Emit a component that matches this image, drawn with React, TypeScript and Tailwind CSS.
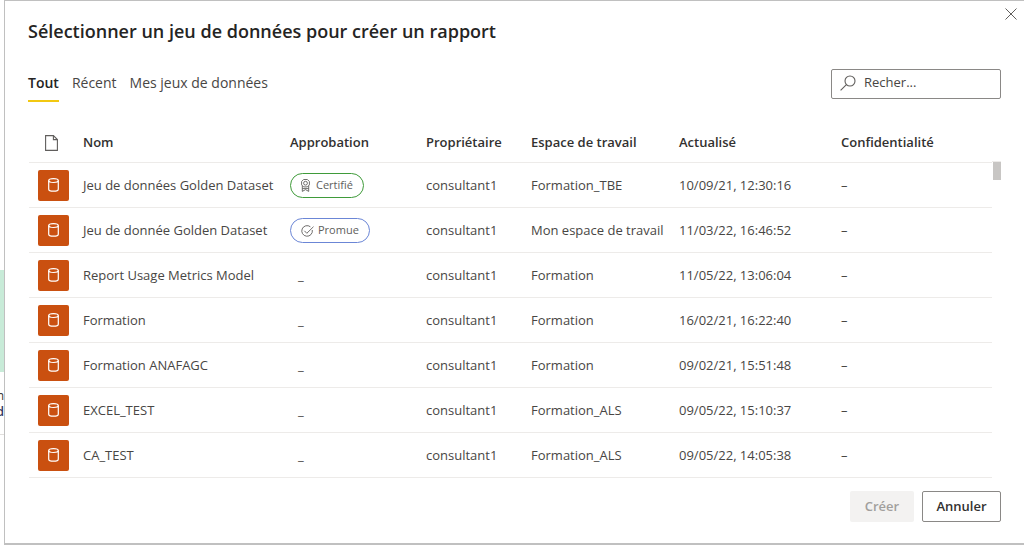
import React, { useState } from 'react';

const tabs = ['Tout', 'Récent', 'Mes jeux de données'];

type Endorsement = 'certified' | 'promoted';

type Dataset = {
  name: string;
  endorsement?: Endorsement;
  owner: string;
  workspace: string;
  refreshed: string;
};

const datasets: Dataset[] = [
  {
    name: 'Jeu de données Golden Dataset',
    endorsement: 'certified',
    owner: 'consultant1',
    workspace: 'Formation_TBE',
    refreshed: '10/09/21, 12:30:16'
  },
  {
    name: 'Jeu de donnée Golden Dataset',
    endorsement: 'promoted',
    owner: 'consultant1',
    workspace: 'Mon espace de travail',
    refreshed: '11/03/22, 16:46:52'
  },
  {
    name: 'Report Usage Metrics Model',
    owner: 'consultant1',
    workspace: 'Formation',
    refreshed: '11/05/22, 13:06:04'
  },
  {
    name: 'Formation',
    owner: 'consultant1',
    workspace: 'Formation',
    refreshed: '16/02/21, 16:22:40'
  },
  {
    name: 'Formation ANAFAGC',
    owner: 'consultant1',
    workspace: 'Formation',
    refreshed: '09/02/21, 15:51:48'
  },
  {
    name: 'EXCEL_TEST',
    owner: 'consultant1',
    workspace: 'Formation_ALS',
    refreshed: '09/05/22, 15:10:37'
  },
  {
    name: 'CA_TEST',
    owner: 'consultant1',
    workspace: 'Formation_ALS',
    refreshed: '09/05/22, 14:05:38'
  }
];

function CloseIcon() {
  return (
    <svg width="12" height="12" viewBox="0 0 12 12" fill="none" stroke="#605e5c" aria-hidden="true">
      <path d="M.5.5l11 11M11.5.5l-11 11" />
    </svg>
  );
}

function SearchIcon() {
  return (
    <svg width="16" height="16" viewBox="0 0 16 16" fill="none" stroke="#605e5c" strokeWidth="1.1" aria-hidden="true">
      <circle cx="10" cy="6" r="5" />
      <path d="M6.4 9.6L.6 15.4" />
    </svg>
  );
}

function PageIcon() {
  return (
    <svg width="14" height="16" viewBox="0 0 14 16" fill="none" stroke="#605e5c" strokeWidth="1.1" aria-hidden="true">
      <path d="M.6.6h7.8l4 4v10.8H.6z" />
      <path d="M8.4.6v4h4" />
    </svg>
  );
}

function DatasetIcon() {
  return (
    <svg width="11" height="14" viewBox="0 0 11 14" fill="none" stroke="white" strokeWidth="1.2" aria-hidden="true">
      <ellipse cx="5.5" cy="2.6" rx="4.8" ry="1.9" />
      <path d="M.7 2.6v8.6c0 1.2 1.6 2 4.8 2s4.8-.8 4.8-2V2.6" />
    </svg>
  );
}

function RibbonIcon() {
  return (
    <svg width="9" height="13" viewBox="0 0 9 13" fill="none" stroke="#605e5c" strokeWidth=".9" aria-hidden="true">
      <path d="M2.6.5h3.8l2 2v3.4l-2 2H2.6l-2-2V2.5z" />
      <circle cx="4.5" cy="4.2" r="1.9" />
      <path d="M1.3 6.8v5.6l3.2-1.8 3.2 1.8V6.8M1.3 9.6h6.4" />
    </svg>
  );
}

function PromotedIcon() {
  return (
    <svg width="13" height="12" viewBox="0 0 13 12" fill="none" stroke="#605e5c" strokeWidth=".9" aria-hidden="true">
      <path d="M9.4 1.8A5.3 5.3 0 1 0 11.3 5" />
      <path d="M3.4 5.8l2.4 2.5 6.7-6.6" />
    </svg>
  );
}

function EndorsementBadge({ type }: { type: Endorsement }) {
  if (type === 'certified') {
    return (
      <span className="inline-flex h-[25px] items-center gap-1.5 rounded-full border border-[#3f9b3a] px-2.5 align-middle text-[11px] text-[#605e5c]">
        <RibbonIcon />
        Certifié
      </span>
    );
  }
  return (
    <span className="inline-flex h-[25px] items-center gap-1 rounded-full border border-[#6b86d6] px-2.5 align-middle text-[11px] text-[#605e5c]">
      <PromotedIcon />
      Promue
    </span>
  );
}

export default function App() {
  const [activeTab, setActiveTab] = useState('Tout');

  return (
    <div className="flex items-stretch overflow-hidden bg-white font-['Open_Sans','Noto_Sans',sans-serif] text-[#323130]">
      {/* Edge of the page behind the dialog */}
      <div className="flex w-1 shrink-0 flex-col overflow-hidden pt-[270px] text-[12px] leading-4" aria-hidden="true">
        <div className="h-[102px] shrink-0 bg-[#c8ebd8]" />
        <div className="flex h-[63px] shrink-0 flex-col items-end border-b border-[#e1dfdd] pt-4">
          <span>n</span>
          <span className="font-semibold text-[#32325c]">d</span>
        </div>
      </div>

      <div
        role="dialog"
        aria-labelledby="dialog-title"
        className="relative min-w-0 flex-1 border-t border-b-2 border-l border-[#c0c0c0] px-[23px] pt-4 pb-[21px]"
      >
        <button type="button" aria-label="Fermer" className="absolute top-[7px] right-[7px]">
          <CloseIcon />
        </button>

        <h1 id="dialog-title" className="text-[18px] leading-7 font-semibold text-[#252423]">
          Sélectionner un jeu de données pour créer un rapport
        </h1>

        <div className="mt-6 flex items-start justify-between">
          <div role="tablist" className="flex gap-[13px]">
            {tabs.map((tab) => (
              <button
                key={tab}
                type="button"
                role="tab"
                aria-selected={activeTab === tab}
                onClick={() => setActiveTab(tab)}
                className={`h-[33px] border-b-2 pb-1 text-[14px] ${
                  activeTab === tab ? 'border-[#f2c811] font-semibold text-[#252423]' : 'border-transparent text-[#484644]'
                }`}
              >
                {tab}
              </button>
            ))}
          </div>

          <label className="flex h-[30px] w-[170px] items-center gap-2 rounded-xs border border-[#8a8886] px-2 pb-0.5">
            <SearchIcon />
            <input
              type="text"
              aria-label="Rechercher"
              placeholder="Recher..."
              className="min-w-0 flex-1 text-[13px] outline-none placeholder:text-[#484644]"
            />
          </label>
        </div>

        <div className="mt-6 flex pl-px">
          <table className="flex-1 table-fixed text-left text-[13px]">
            <colgroup>
              <col className="w-[54px]" />
              <col className="w-[207px]" />
              <col className="w-[136px]" />
              <col className="w-[105px]" />
              <col className="w-[148px]" />
              <col className="w-[162px]" />
              <col />
            </colgroup>
            <thead>
              <tr className="h-9 border-b border-[#edebe9] *:pb-0.5 *:font-semibold">
                <th aria-label="Type" className="pl-4">
                  <PageIcon />
                </th>
                <th>Nom</th>
                <th>Approbation</th>
                <th>Propriétaire</th>
                <th>Espace de travail</th>
                <th>Actualisé</th>
                <th>Confidentialité</th>
              </tr>
            </thead>
            <tbody className="text-[#484644]">
              {datasets.map((dataset) => (
                <tr key={dataset.name} className="h-[45px] border-b border-[#edebe9] *:pt-0.5">
                  <td className="pl-[9px]">
                    <div className="flex size-[31px] items-center justify-center rounded-xs bg-[#ca5010] pb-0.5">
                      <DatasetIcon />
                    </div>
                  </td>
                  <td>{dataset.name}</td>
                  <td>
                    {dataset.endorsement ? (
                      <EndorsementBadge type={dataset.endorsement} />
                    ) : (
                      <span className="pl-2">_</span>
                    )}
                  </td>
                  <td>{dataset.owner}</td>
                  <td>{dataset.workspace}</td>
                  <td>{dataset.refreshed}</td>
                  <td>–</td>
                </tr>
              ))}
            </tbody>
          </table>

          {/* Scrollbar */}
          <div className="mt-[35px] w-[9px] border-t border-[#edebe9]">
            <div className="ml-px h-[18px] bg-[#c8c6c4]" />
          </div>
        </div>

        <div className="mt-[13px] flex justify-end gap-2 text-[13px] font-semibold">
          <button type="button" disabled className="h-[31px] w-16 rounded-xs bg-[#f3f2f1] pt-0.5 text-[#a19f9d]">
            Créer
          </button>
          <button type="button" className="h-[31px] w-[79px] rounded-xs border border-[#8a8886] pt-0.5">
            Annuler
          </button>
        </div>
      </div>
    </div>
  );
}
